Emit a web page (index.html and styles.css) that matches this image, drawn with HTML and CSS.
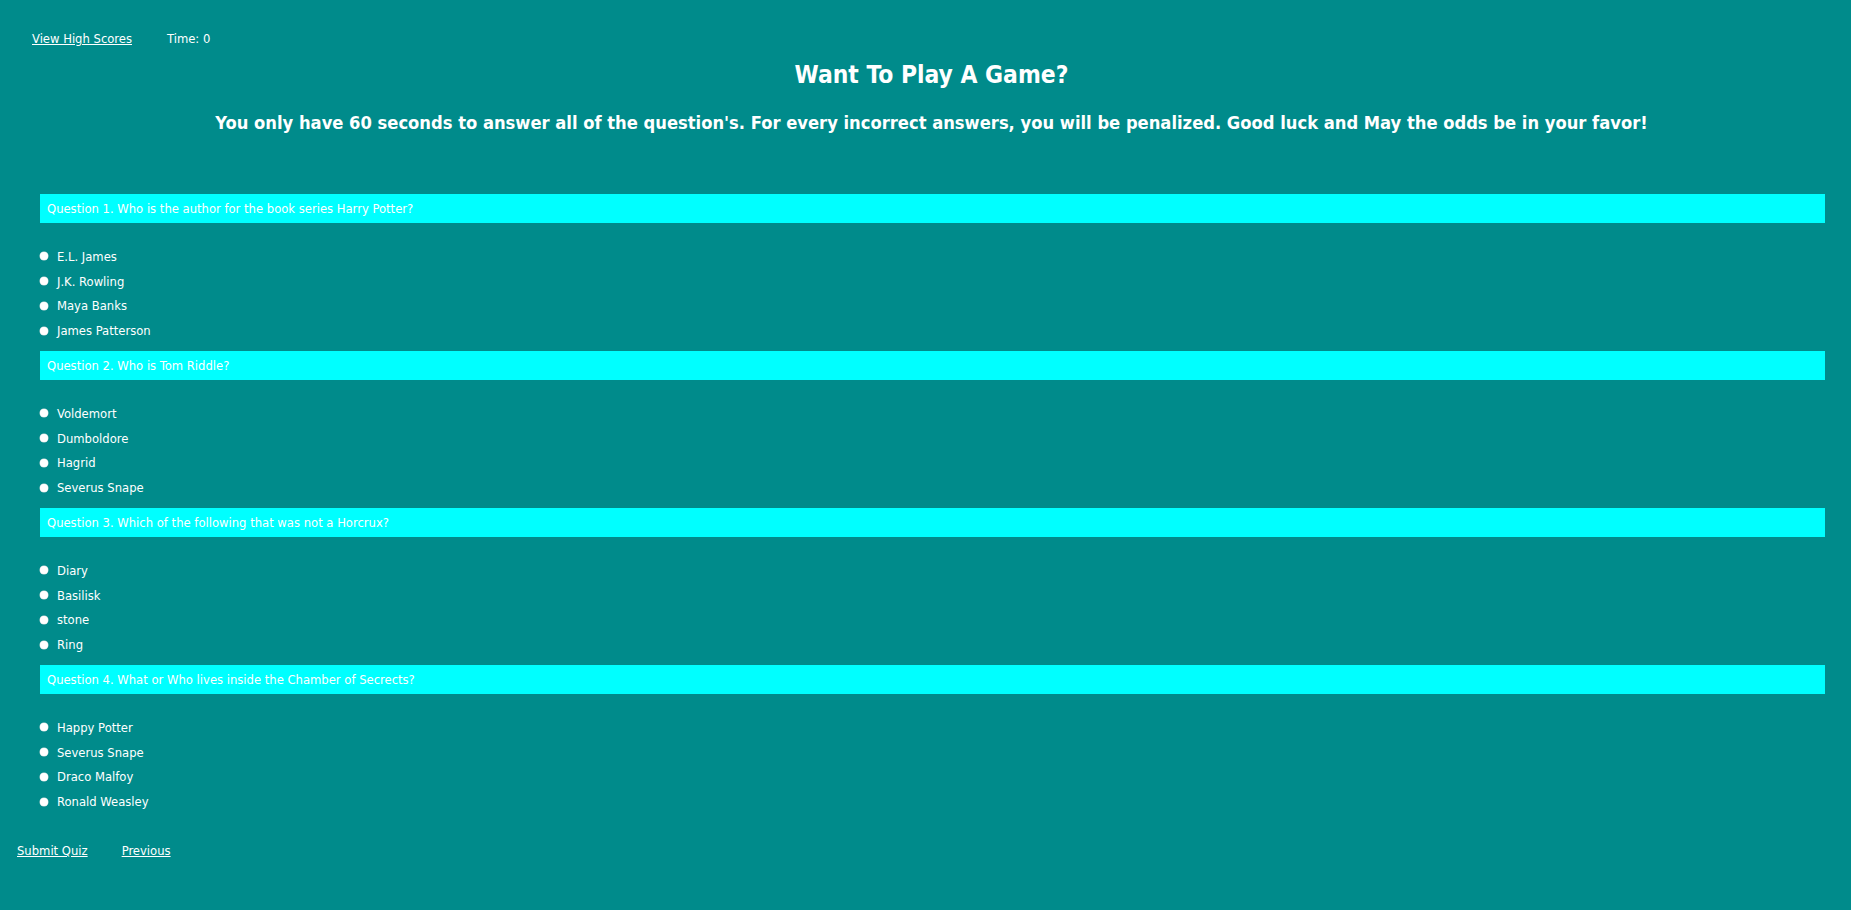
FILE: index.html
```html
<!DOCTYPE html>
<html lang="en">
<head>
<meta charset="utf-8">
<title>Quiz</title>
<link rel="stylesheet" href="styles.css">
</head>
<body>
<header class="topbar">
  <a class="link" href="#">View High Scores</a>
  <span class="timer">Time: 0</span>
</header>
<section class="intro">
  <h1 class="title">Want To Play A Game?</h1>
  <h2 class="subtitle">You only have 60 seconds to answer all of the question's. For every incorrect answers, you will be penalized. Good luck and May the odds be in your favor!</h2>
</section>
<main class="quiz">
  <div class="question">
    <div class="q-bar">Question 1. Who is the author for the book series Harry Potter?</div>
    <div class="options">
      <label class="opt"><input type="radio" name="q1" class="radio"><span>E.L. James</span></label>
      <label class="opt"><input type="radio" name="q1" class="radio"><span>J.K. Rowling</span></label>
      <label class="opt"><input type="radio" name="q1" class="radio"><span>Maya Banks</span></label>
      <label class="opt"><input type="radio" name="q1" class="radio"><span>James Patterson</span></label>
    </div>
  </div>
  <div class="question">
    <div class="q-bar">Question 2. Who is Tom Riddle?</div>
    <div class="options">
      <label class="opt"><input type="radio" name="q2" class="radio"><span>Voldemort</span></label>
      <label class="opt"><input type="radio" name="q2" class="radio"><span>Dumboldore</span></label>
      <label class="opt"><input type="radio" name="q2" class="radio"><span>Hagrid</span></label>
      <label class="opt"><input type="radio" name="q2" class="radio"><span>Severus Snape</span></label>
    </div>
  </div>
  <div class="question">
    <div class="q-bar">Question 3. Which of the following that was not a Horcrux?</div>
    <div class="options">
      <label class="opt"><input type="radio" name="q3" class="radio"><span>Diary</span></label>
      <label class="opt"><input type="radio" name="q3" class="radio"><span>Basilisk</span></label>
      <label class="opt"><input type="radio" name="q3" class="radio"><span>stone</span></label>
      <label class="opt"><input type="radio" name="q3" class="radio"><span>Ring</span></label>
    </div>
  </div>
  <div class="question">
    <div class="q-bar">Question 4. What or Who lives inside the Chamber of Secrects?</div>
    <div class="options">
      <label class="opt"><input type="radio" name="q4" class="radio"><span>Happy Potter</span></label>
      <label class="opt"><input type="radio" name="q4" class="radio"><span>Severus Snape</span></label>
      <label class="opt"><input type="radio" name="q4" class="radio"><span>Draco Malfoy</span></label>
      <label class="opt"><input type="radio" name="q4" class="radio"><span>Ronald Weasley</span></label>
    </div>
  </div>
</main>
<footer class="actions">
  <a class="link" href="#">Submit Quiz</a>
  <a class="link" href="#">Previous</a>
</footer>
</body>
</html>
```

FILE: styles.css
```css
html, body {
  margin: 0;
  padding: 0;
}
body {
  background: #008b8b;
  color: #ffffff;
  font-family: "DejaVu Sans Condensed", "DejaVu Sans", sans-serif;
  font-stretch: condensed;
  font-size: 12.9px;
  min-height: 910px;
}
.link {
  color: #ffffff;
  text-decoration: underline;
}
.topbar {
  display: flex;
  gap: 35px;
  padding: 32px 0 0 32px;
  height: 14px;
  line-height: 14px;
}
.intro {
  text-align: center;
  padding-left: 12px;
}
.title {
  margin: 14px 0 0;
  font-size: 24.4px;
  line-height: 30px;
  font-weight: bold;
}
.subtitle {
  margin: 22px 0 0;
  font-size: 18.2px;
  line-height: 22px;
  font-weight: bold;
}
.quiz {
  margin: 60px 26px 0 40px;
}
.q-bar {
  background: #00ffff;
  color: #ffffff;
  height: 29px;
  line-height: 29px;
  padding-left: 7px;
}
.options {
  padding: 21px 0 8px;
}
.opt {
  display: flex;
  align-items: center;
  height: 24.75px;
}
.radio {
  appearance: none;
  -webkit-appearance: none;
  width: 8px;
  height: 8px;
  margin: 0 9px 0 0;
  border-radius: 50%;
  background: #ffffff;
  box-shadow: 0 0 0 0.5px #c8d8d8;
}
.actions {
  display: flex;
  gap: 34px;
  padding: 22px 0 0 17px;
  line-height: 14px;
}
```
